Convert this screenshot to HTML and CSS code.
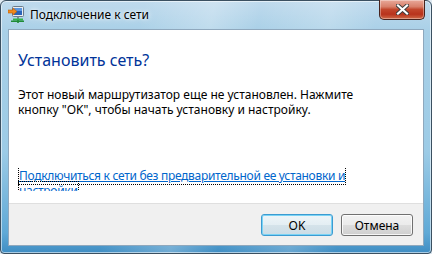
FILE: index.html
```html
<!DOCTYPE html>
<html lang="ru">
<head>
<meta charset="utf-8">
<title>Подключение к сети</title>
<link rel="stylesheet" href="styles.css">
</head>
<body>
<div class="window">
  <div class="titlebar">
    <svg class="app-icon" width="16" height="17" viewBox="0 0 16 17">
      <rect x="4.5" y="0.5" width="11" height="10" rx="1" fill="#e9eef3" stroke="#6b7c8c"/>
      <rect x="6" y="2" width="8" height="7" fill="#2a63b8"/>
      <rect x="6" y="2" width="8" height="3" fill="#5a96df"/>
      <rect x="9" y="10.5" width="2" height="2.5" fill="#7b8a96"/>
      <rect x="5" y="12.5" width="10" height="2" fill="#2fb34a"/>
      <rect x="3" y="14.5" width="14" height="1.5" fill="#1f8a36"/>
      <rect x="9.2" y="14" width="1.6" height="3" fill="#1f8a36"/>
      <path d="M0 4 H5 V2 L9 5.5 L5 9 V7 H0 Z" fill="#f08a1c" stroke="#b85c08" stroke-width="0.6"/>
    </svg>
    <span class="title">Подключение к сети</span>
    <div class="close">
      <svg width="13" height="11" viewBox="0 0 13 11">
        <path d="M2 1.5 L11 9.5 M11 1.5 L2 9.5" stroke="#3b3b3b" stroke-width="4" stroke-linecap="square"/>
        <path d="M2 1.5 L11 9.5 M11 1.5 L2 9.5" stroke="#ffffff" stroke-width="2.2" stroke-linecap="square"/>
      </svg>
    </div>
  </div>
  <div class="client">
    <div class="content">
      <h1 class="heading">Установить сеть?</h1>
      <p class="message">Этот новый маршрутизатор еще не установлен. Нажмите кнопку "OK", чтобы начать установку и настройку.</p>
      <div class="link-box">
        <a class="link" href="#">Подключиться к сети без предварительной ее установки и настройки</a>
      </div>
    </div>
    <div class="footer">
      <button class="btn btn-default">OK</button>
      <button class="btn">Отмена</button>
    </div>
  </div>
</div>
</body>
</html>
```
FILE: styles.css
```css
* { box-sizing: border-box; }
html, body {
  margin: 0;
  padding: 0;
  width: 432px;
  height: 254px;
  overflow: hidden;
  background: #dfe9f1;
  font-family: "Noto Sans", "Open Sans", sans-serif;
}
.window {
  width: 432px;
  height: 254px;
  border: 1px solid #3b5061;
  border-radius: 6px 6px 4px 4px;
  background:
    linear-gradient(100deg, rgba(255,255,255,0) 30%, rgba(255,255,255,0.25) 45%, rgba(255,255,255,0) 55%, rgba(255,255,255,0.2) 70%, rgba(255,255,255,0) 80%),
    linear-gradient(to bottom, #bfdaed 0%, #a9d0e7 12%, #9ccbe6 60%, #5fa9d6 92%, #3f8dc3 100%);
  box-shadow: inset 0 0 0 1px rgba(255,255,255,0.55);
  display: flex;
  flex-direction: column;
  padding: 0 7px 7px 7px;
}
.titlebar {
  height: 28px;
  display: flex;
  align-items: flex-start;
  flex-shrink: 0;
}
.app-icon {
  margin-top: 5px;
  margin-left: 0;
  flex-shrink: 0;
}
.title {
  margin-left: 6px;
  margin-top: 6px;
  font-size: 12px;
  line-height: 16px;
  color: #000;
  text-shadow: 0 0 6px rgba(255,255,255,0.9), 0 0 3px rgba(255,255,255,0.9);
}
.close {
  margin-left: auto;
  margin-top: -1px;
  margin-right: -1px;
  width: 46px;
  height: 20px;
  border: 1px solid #47231d;
  border-top: none;
  border-radius: 0 0 5px 5px;
  background: linear-gradient(to bottom, #e9a99a 0%, #d8806b 35%, #c2462c 50%, #b8331c 75%, #cf6a48 100%);
  box-shadow: inset 0 0 0 1px rgba(255,255,255,0.35);
  display: flex;
  align-items: center;
  justify-content: center;
}
.client {
  flex: 1;
  min-height: 0;
  display: flex;
  flex-direction: column;
  border: 1px solid #8fa8bd;
  background: #fff;
}
.content {
  flex: 1;
  min-height: 0;
  overflow: hidden;
  padding: 20px 9px 0 9px;
}
.heading {
  margin: 0;
  font-size: 16px;
  line-height: 21px;
  font-weight: normal;
  color: #003399;
}
.message {
  margin: 16px 0 0 0;
  width: 345px;
  font-size: 12px;
  line-height: 15px;
  color: #000;
}
.link-box {
  margin-top: 51px;
  width: 345px;
  height: 23px;
  overflow: hidden;
  font-size: 12px;
  line-height: 15px;
  letter-spacing: -0.3px;
}
.link {
  color: #0066cc;
  text-decoration: underline;
  border: 1px dotted #000;
  -webkit-box-decoration-break: clone;
  box-decoration-break: clone;
}
.footer {
  height: 42px;
  flex-shrink: 0;
  background: #f0f0f0;
  border-top: 1px solid #dfdfdf;
  display: flex;
  justify-content: flex-end;
  align-items: flex-start;
  gap: 8px;
  padding: 10px 10px 0 0;
}
.btn {
  width: 72px;
  height: 22px;
  padding: 0;
  font-family: inherit;
  font-size: 12px;
  color: #000;
  border: 1px solid #707070;
  border-radius: 3px;
  background: linear-gradient(to bottom, #f2f2f2 0%, #ebebeb 49%, #dddddd 50%, #cfcfcf 100%);
  box-shadow: inset 0 0 0 1px rgba(255,255,255,0.8);
}
.btn-default {
  border-color: #3c9bd1;
  background: linear-gradient(to bottom, #eef5f8 0%, #e4eef3 49%, #d5e3ea 50%, #cbdce5 100%);
  box-shadow: inset 0 0 0 1px #7ad3f5;
}
```
